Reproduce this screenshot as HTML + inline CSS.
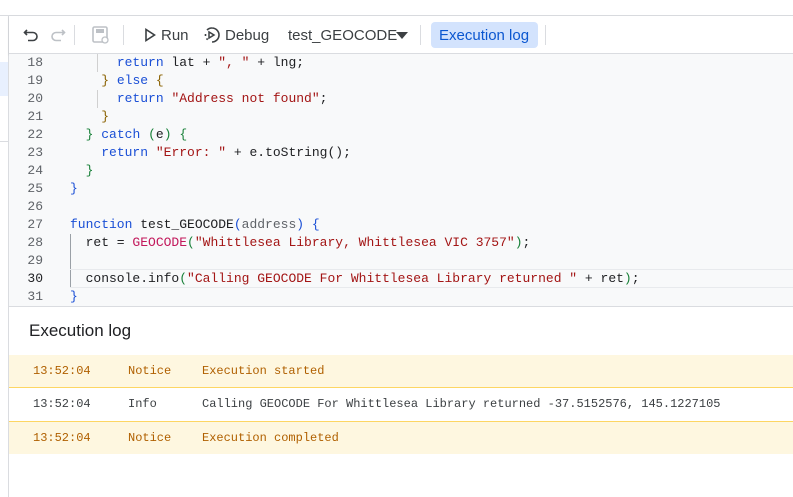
<!DOCTYPE html>
<html><head><style>
*{margin:0;padding:0;box-sizing:border-box}
body{width:793px;height:497px;overflow:hidden;background:#fff;font-family:"Liberation Sans",Arial,sans-serif;position:relative}
.top{position:absolute;left:0;top:0;width:793px;height:16px;border-bottom:1px solid #dadce0;background:#fff}
.side{position:absolute;left:0;top:16px;width:9px;height:481px;border-right:1px solid #dadce0;background:#fff}
.side .hl{position:absolute;left:0;top:46px;width:8px;height:34px;background:#e8f0fe}
.side .ln{position:absolute;left:0;top:125px;width:8px;border-top:1px solid #dadce0}
.tb{position:absolute;left:9px;top:16px;right:0;height:38px;background:#fff;border-bottom:1px solid #dadce0;box-shadow:0 1px 2px rgba(60,64,67,.15)}
.tb span{position:absolute;top:11px;font-size:15px;color:#3c4043}
.sep{position:absolute;top:9px;width:1px;height:20px;background:#dadce0}
.code{position:absolute;left:9px;top:54px;right:0;height:253px;background:#f8f9fa;border-bottom:1px solid #dadce0;font-family:"Liberation Mono",monospace;font-size:13px}
.l{position:absolute;left:0;right:0;height:18px;line-height:18px;white-space:pre}
.n{position:absolute;left:0;width:34px;text-align:right;color:#5f6368}
.t{position:absolute;left:61px;color:#202124}
.k{color:#1a4fd6}.s{color:#a31515}.b{color:#8a6100}.g{color:#188038}.p{color:#c2185b}.a{color:#5f6368}
.guide{position:absolute;width:1px;background:#d0d0d0}
.log{position:absolute;left:9px;top:307px;right:0;bottom:0;background:#fff}
.log h2{position:absolute;left:20px;top:14px;font-size:17px;font-weight:normal;color:#202124}
.hd{position:absolute;left:0;right:0;top:48px;border-top:1px solid #dadce0}
.row{position:absolute;left:0;right:0;height:33px;line-height:33px;font-family:"Liberation Mono",monospace;font-size:12px;white-space:pre}
.row.y{background:#fef7e0;color:#b06000}
.row.w{background:#fff;color:#3c4043}
.row span{position:absolute}
</style></head><body>
<div class="top"></div>
<div class="side"><div class="hl"></div><div class="ln"></div></div>
<div class="tb">
<svg style="position:absolute;left:14px;top:11px" width="16" height="16" viewBox="0 0 16 16"><path d="M4 3L1.5 5.5 4 8M1.5 5.5H10a4 4 0 010 8H5" fill="none" stroke="#3c4043" stroke-width="1.6"/></svg>
<svg style="position:absolute;left:41px;top:11px" width="16" height="16" viewBox="0 0 16 16"><path d="M12 3l2.5 2.5L12 8M14.5 5.5H6a4 4 0 000 8h5" fill="none" stroke="#bdc1c6" stroke-width="1.6"/></svg>
<div class="sep" style="left:65px"></div>
<svg style="position:absolute;left:82px;top:9px" width="20" height="20" viewBox="0 0 20 20"><rect x="2" y="2" width="14" height="15" rx="1.5" fill="none" stroke="#bdc1c6" stroke-width="1.6"/><rect x="5" y="4" width="8" height="4" fill="#bdc1c6"/><circle cx="14" cy="15" r="3" fill="#fff" stroke="#bdc1c6" stroke-width="1.3"/></svg>
<div class="sep" style="left:114px"></div>
<svg style="position:absolute;left:135px;top:12px" width="12" height="14" viewBox="0 0 12 14"><path d="M2 1.5v11L10.5 7z" fill="none" stroke="#3c4043" stroke-width="1.6"/></svg>
<span style="left:152px">Run</span>
<svg style="position:absolute;left:194px;top:10px" width="18" height="18" viewBox="0 0 18 18"><path d="M9 2a7 7 0 110 14M9 2A7 7 0 004 4" fill="none" stroke="#3c4043" stroke-width="1.6"/><path d="M6 6v6l5-3z" fill="none" stroke="#3c4043" stroke-width="1.5"/><path d="M2.5 8v2M3.5 12.5l1.2 1.2" stroke="#3c4043" stroke-width="1.6"/></svg>
<span style="left:216px">Debug</span>
<span style="left:279px">test_GEOCODE</span>
<svg style="position:absolute;left:387px;top:16px" width="12" height="7"><path d="M0 0h12L6 7z" fill="#3c4043"/></svg>
<div class="sep" style="left:411px"></div>
<div style="position:absolute;left:422px;top:6px;width:107px;height:26px;background:#d3e3fd;border-radius:4px"></div>
<span style="left:430px;color:#0b57d0">Execution log</span>
<div class="sep" style="left:536px"></div>
</div>
<div class="code">
<div class="guide" style="left:88px;top:0;height:18px"></div>
<div class="guide" style="left:88px;top:36px;height:18px"></div>
<div class="guide" style="left:61px;top:180px;height:54px;background:#9aa0a6"></div>
<div style="position:absolute;left:61px;right:0;top:215px;height:19px;border-top:1px solid #e8eaed;border-bottom:1px solid #e8eaed"></div>
<div class="l" style="top:0"><span class="n">18</span><span class="t">      <span class="k">return</span> lat + <span class="s">", "</span> + lng;</span></div>
<div class="l" style="top:18px"><span class="n">19</span><span class="t">    <span class="b">}</span> <span class="k">else</span> <span class="b">{</span></span></div>
<div class="l" style="top:36px"><span class="n">20</span><span class="t">      <span class="k">return</span> <span class="s">"Address not found"</span>;</span></div>
<div class="l" style="top:54px"><span class="n">21</span><span class="t">    <span class="b">}</span></span></div>
<div class="l" style="top:72px"><span class="n">22</span><span class="t">  <span class="g">}</span> <span class="k">catch</span> <span class="g">(</span>e<span class="g">)</span> <span class="g">{</span></span></div>
<div class="l" style="top:90px"><span class="n">23</span><span class="t">    <span class="k">return</span> <span class="s">"Error: "</span> + e.toString();</span></div>
<div class="l" style="top:108px"><span class="n">24</span><span class="t">  <span class="g">}</span></span></div>
<div class="l" style="top:126px"><span class="n">25</span><span class="t"><span class="k">}</span></span></div>
<div class="l" style="top:144px"><span class="n">26</span><span class="t"></span></div>
<div class="l" style="top:162px"><span class="n">27</span><span class="t"><span class="k">function</span> test_GEOCODE<span class="k">(</span><span class="a">address</span><span class="k">)</span> <span class="k">{</span></span></div>
<div class="l" style="top:180px"><span class="n">28</span><span class="t">  ret = <span class="p">GEOCODE</span><span class="g">(</span><span class="s">"Whittlesea Library, Whittlesea VIC 3757"</span><span class="g">)</span>;</span></div>
<div class="l" style="top:198px"><span class="n">29</span><span class="t"></span></div>
<div class="l" style="top:216px"><span class="n" style="color:#202124">30</span><span class="t">  console.info<span class="g">(</span><span class="s">"Calling GEOCODE For Whittlesea Library returned "</span> + ret<span class="g">)</span>;</span></div>
<div class="l" style="top:234px"><span class="n">31</span><span class="t"><span class="k">}</span></span></div>
</div>
<div class="log">
<h2>Execution log</h2>
<div class="hd"></div>
<div class="row y" style="top:48px;border-bottom:1px solid #fdd663"><span style="left:24px">13:52:04</span><span style="left:119px">Notice</span><span style="left:193px">Execution started</span></div>
<div class="row w" style="top:81px"><span style="left:24px">13:52:04</span><span style="left:119px">Info</span><span style="left:193px">Calling GEOCODE For Whittlesea Library returned -37.5152576, 145.1227105</span></div>
<div class="row y" style="top:114px;border-top:1px solid #fdd663"><span style="left:24px">13:52:04</span><span style="left:119px">Notice</span><span style="left:193px">Execution completed</span></div>
</div>
</body></html>
